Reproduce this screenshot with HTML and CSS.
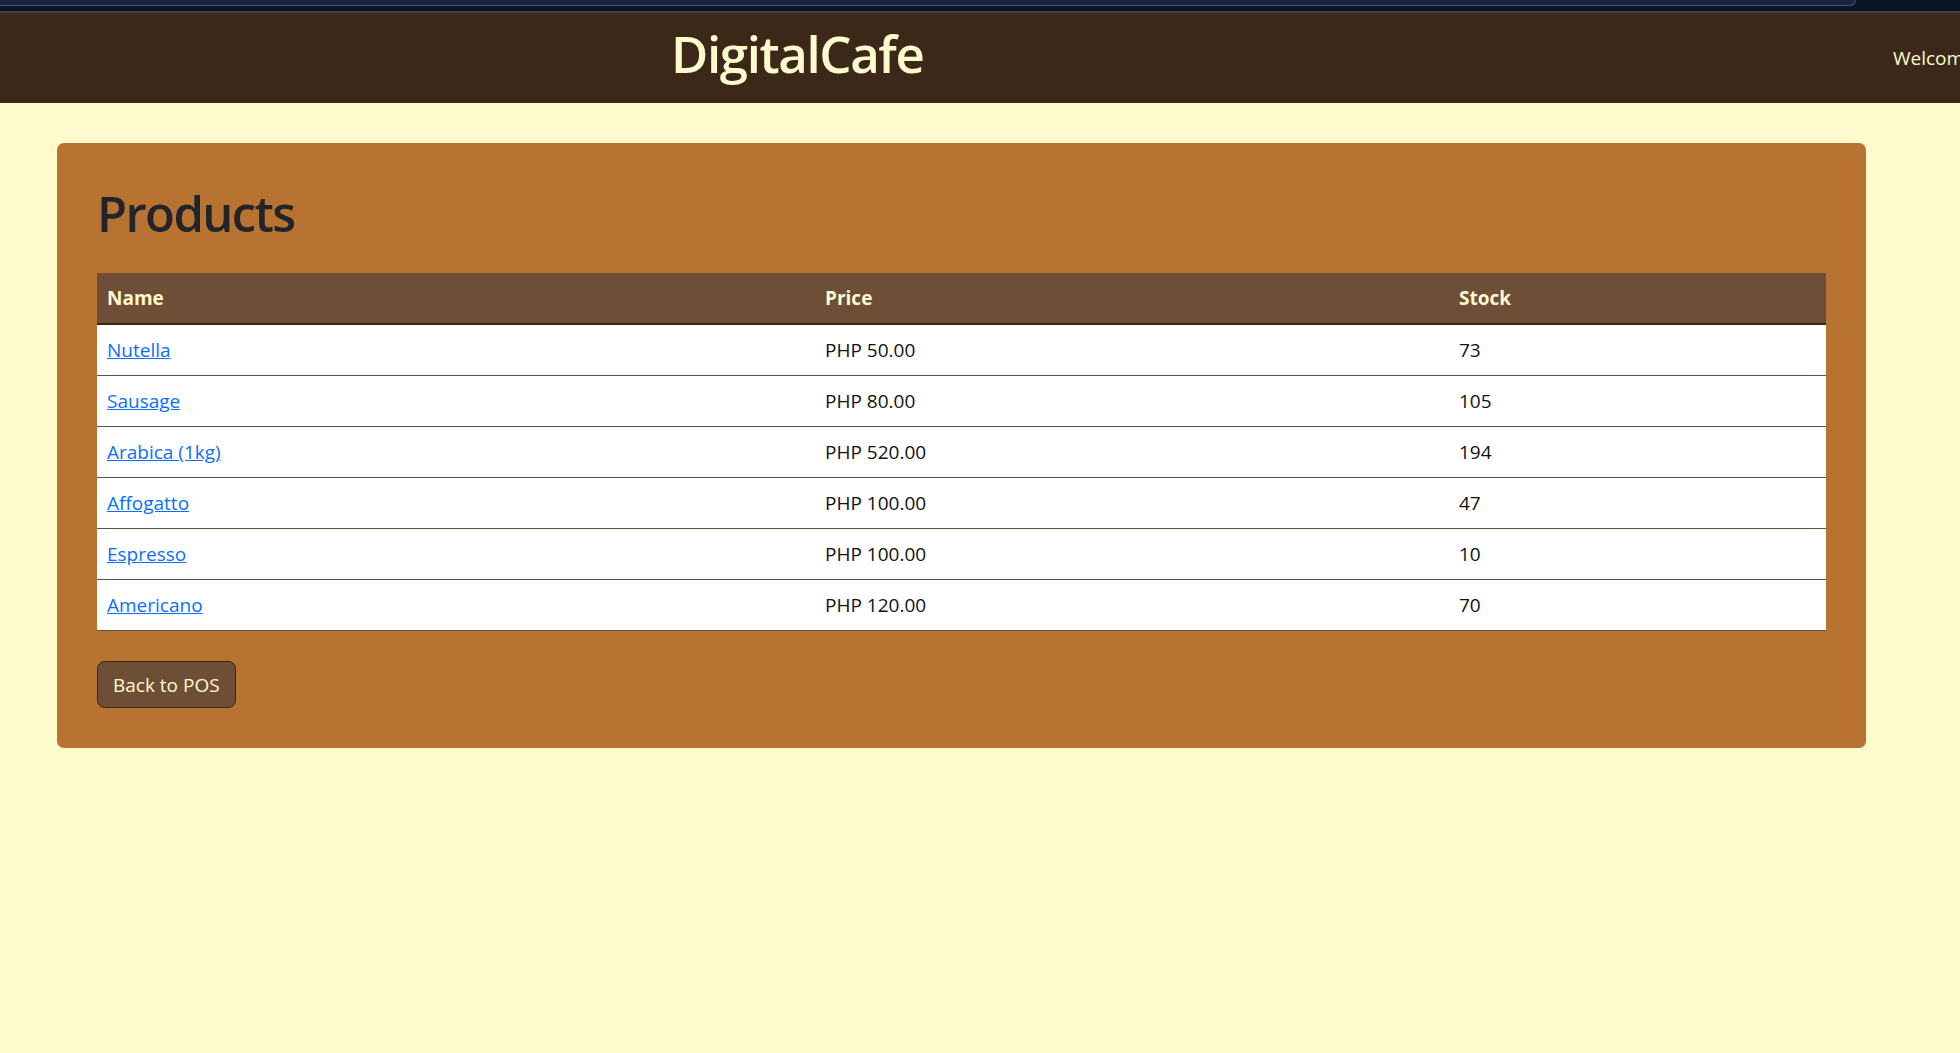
FILE: index.html
```html
<!DOCTYPE html>
<html lang="en">
<head>
<meta charset="utf-8">
<title>DigitalCafe - Products</title>
<link rel="stylesheet" href="styles.css">
</head>
<body>
<div class="chrome"><div class="chrome-bar"></div></div>
<header class="topbar">
  <h1 class="brand">DigitalCafe</h1>
  <span class="welcome">Welcome, admin</span>
</header>
<main class="card">
  <h1 class="title">Products</h1>
  <table class="products">
    <thead>
      <tr><th class="c-name">Name</th><th class="c-price">Price</th><th class="c-stock">Stock</th></tr>
    </thead>
    <tbody>
      <tr><td><a href="#">Nutella</a></td><td>PHP 50.00</td><td>73</td></tr>
      <tr><td><a href="#">Sausage</a></td><td>PHP 80.00</td><td>105</td></tr>
      <tr><td><a href="#">Arabica (1kg)</a></td><td>PHP 520.00</td><td>194</td></tr>
      <tr><td><a href="#">Affogatto</a></td><td>PHP 100.00</td><td>47</td></tr>
      <tr><td><a href="#">Espresso</a></td><td>PHP 100.00</td><td>10</td></tr>
      <tr><td><a href="#">Americano</a></td><td>PHP 120.00</td><td>70</td></tr>
    </tbody>
  </table>
  <div class="actions"><a class="btn" href="#">Back to POS</a></div>
</main>
</body>
</html>
```
FILE: styles.css
```css
* { box-sizing: border-box; }
html, body { margin: 0; padding: 0; }
body {
  background: #FFFACD;
  font-family: "Open Sans", "Noto Sans", sans-serif;
  font-size: 19px;
  line-height: 30px;
  color: #212529;
  overflow: hidden;
}
.chrome {
  height: 13px;
  background: #0c1322;
  border-bottom: 2px solid #3b4354;
}
.chrome-bar {
  width: 1856px;
  height: 6px;
  background: #1b2341;
  border-bottom: 1px solid #4d536a;
  border-right: 1px solid #4d536a;
  border-bottom-right-radius: 8px;
}
.topbar {
  display: flex;
  align-items: center;
  height: 90px;
  padding: 10px 0;
  background: #3b2819;
  color: #FFFACD;
  white-space: nowrap;
  overflow: hidden;
}
.brand {
  flex: 0 0 1222px;
  margin: 0 0 10px 671px;
  font-size: 51px;
  font-weight: 600;
  line-height: 60px;
  letter-spacing: -1.4px;
}
.welcome {
  flex: 0 0 auto;
  font-size: 19px;
  line-height: 30px;
}
.card {
  display: block;
  width: 1809px;
  margin: 40px 0 0 57px;
  padding: 40px;
  background: #B87333;
  border-radius: 7px;
}
.title {
  margin: 0 0 30px;
  font-size: 49px;
  font-weight: 600;
  line-height: 60px;
  letter-spacing: -1.6px;
  color: #212529;
}
.products {
  width: 100%;
  border-collapse: collapse;
  background: #ffffff;
  margin-bottom: 20px;
}
.products th {
  background: #6F4E37;
  color: #FFFACD;
  font-weight: 700;
  text-align: left;
  padding: 10px;
  line-height: 30px;
  border-bottom: 2px solid #3a2616;
}
.c-name { width: 718px; }
.c-price { width: 634px; }
.products td {
  padding: 10px;
  line-height: 30px;
  border-bottom: 1px solid #6F4E37;
  color: #111;
}
.products a {
  color: #0d6efd;
  text-decoration: underline;
}
.actions { padding-top: 10px; }
.btn {
  display: inline-block;
  padding: 7.5px 15px;
  background: #6F4E37;
  color: #FFFACD;
  border: 1px solid #3b2414;
  border-radius: 7.5px;
  font-size: 19px;
  line-height: 30px;
  text-decoration: none;
}
```
